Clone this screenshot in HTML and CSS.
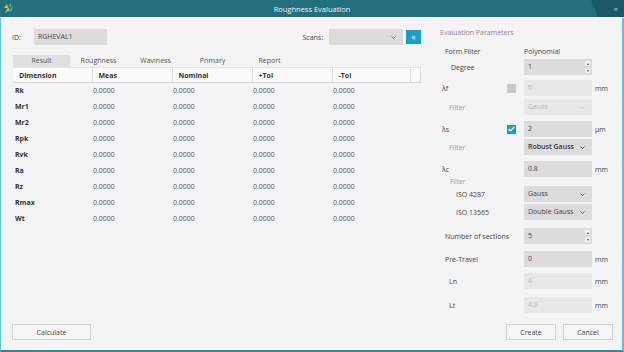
FILE: index.html
```html
<!DOCTYPE html>
<html lang="en">
<head>
    <meta charset="UTF-8">
    <meta name="viewport" content="width=device-width, initial-scale=1.0">
    <title>Roughness Evaluation</title>
    <link rel="stylesheet" href="styles.css">
</head>
<body>
    <div class="window">
        <div class="titlebar">
            <svg class="logo" width="10" height="11" viewBox="0 0 10 11">
                <polygon points="1,10 4,4 6,7" fill="#9fd13b"/>
                <polygon points="4,9 9,2 8,8" fill="#2fa8e0"/>
                <polygon points="0,5 3,1 4,5" fill="#f0c419"/>
                <polygon points="5,3 7,0 7,4" fill="#6cc04a"/>
            </svg>
            <span class="title">Roughness Evaluation</span>
            <div class="title-end"><span class="close">&times;</span></div>
        </div>
        <div class="content">
            <div class="left">
                <div class="toolbar">
                    <span class="lbl">ID:</span>
                    <div class="field id-field">RGHEVAL1</div>
                    <span class="lbl scans-lbl">Scans:</span>
                    <div class="field combo scans"><span></span><svg class="chev" width="5" height="3" viewBox="0 0 5 3"><polyline points="0.5,0.5 2.5,2.5 4.5,0.5" fill="none" stroke="#666" stroke-width="0.9"/></svg></div>
                    <button class="collapse">&laquo;</button>
                </div>
                <div class="tabs">
                    <div class="tab active">Result</div>
                    <div class="tab">Roughness</div>
                    <div class="tab">Waviness</div>
                    <div class="tab">Primary</div>
                    <div class="tab">Report</div>
                </div>
                <table class="results">
                    <colgroup>
                        <col class="c-dim"><col class="c-val"><col class="c-val"><col class="c-val"><col class="c-last"><col class="c-end">
                    </colgroup>
                    <thead>
                        <tr><th>Dimension</th><th>Meas</th><th>Nominal</th><th>+Tol</th><th>-Tol</th><th></th></tr>
                    </thead>
                    <tbody>
                        <tr><td>Rk</td><td>0.0000</td><td>0.0000</td><td>0.0000</td><td>0.0000</td><td></td></tr>
                        <tr><td>Mr1</td><td>0.0000</td><td>0.0000</td><td>0.0000</td><td>0.0000</td><td></td></tr>
                        <tr><td>Mr2</td><td>0.0000</td><td>0.0000</td><td>0.0000</td><td>0.0000</td><td></td></tr>
                        <tr><td>Rpk</td><td>0.0000</td><td>0.0000</td><td>0.0000</td><td>0.0000</td><td></td></tr>
                        <tr><td>Rvk</td><td>0.0000</td><td>0.0000</td><td>0.0000</td><td>0.0000</td><td></td></tr>
                        <tr><td>Ra</td><td>0.0000</td><td>0.0000</td><td>0.0000</td><td>0.0000</td><td></td></tr>
                        <tr><td>Rz</td><td>0.0000</td><td>0.0000</td><td>0.0000</td><td>0.0000</td><td></td></tr>
                        <tr><td>Rmax</td><td>0.0000</td><td>0.0000</td><td>0.0000</td><td>0.0000</td><td></td></tr>
                        <tr><td>Wt</td><td>0.0000</td><td>0.0000</td><td>0.0000</td><td>0.0000</td><td></td></tr>
                    </tbody>
                </table>
                <div class="left-footer">
                    <button class="btn calc">Calculate</button>
                </div>
            </div>

            <div class="right">
                <div class="section-title">Evaluation Parameters</div>

                <div class="row head-row">
                    <span class="lbl ind-1">Form Filter</span><span></span>
                    <span class="plain">Polynomial</span>
                </div>
                <div class="row sp2">
                    <span class="lbl ind-3">Degree</span><span></span>
                    <div class="field spin">1<span class="arrows"><i class="up"></i><i class="down"></i></span></div>
                </div>
                <div class="row sp5">
                    <span class="lbl lam">&lambda;f</span>
                    <span class="check off"></span>
                    <div class="field disabled">0</div>
                    <span class="unit">mm</span>
                </div>
                <div class="row sp3">
                    <span class="lbl sub ind-2">Filter</span><span></span>
                    <div class="field combo disabled"><span>Gauss</span><svg class="chev" width="5" height="3" viewBox="0 0 5 3"><polyline points="0.5,0.5 2.5,2.5 4.5,0.5" fill="none" stroke="#bbb" stroke-width="0.9"/></svg></div>
                </div>
                <div class="row sp6">
                    <span class="lbl lam">&lambda;s</span>
                    <span class="check on"><svg width="7" height="6" viewBox="0 0 7 6"><polyline points="0.8,3 2.7,4.8 6.2,0.8" fill="none" stroke="#fff" stroke-width="1.2"/></svg></span>
                    <div class="field">2</div>
                    <span class="unit">&mu;m</span>
                </div>
                <div class="row sp2">
                    <span class="lbl sub ind-2">Filter</span><span></span>
                    <div class="field combo strong"><span>Robust Gauss</span><svg class="chev" width="5" height="3" viewBox="0 0 5 3"><polyline points="0.5,0.5 2.5,2.5 4.5,0.5" fill="none" stroke="#555" stroke-width="0.9"/></svg></div>
                </div>
                <div class="row sp6">
                    <span class="lbl lam">&lambda;c</span><span></span>
                    <div class="field">0.8</div>
                    <span class="unit">mm</span>
                </div>
                <div class="mini-title">Filter</div>
                <div class="row">
                    <span class="lbl ind-4">ISO 4287</span><span></span>
                    <div class="field combo"><span>Gauss</span><svg class="chev" width="5" height="3" viewBox="0 0 5 3"><polyline points="0.5,0.5 2.5,2.5 4.5,0.5" fill="none" stroke="#555" stroke-width="0.9"/></svg></div>
                </div>
                <div class="row sp2">
                    <span class="lbl ind-4">ISO 13565</span><span></span>
                    <div class="field combo"><span>Double Gauss</span><svg class="chev" width="5" height="3" viewBox="0 0 5 3"><polyline points="0.5,0.5 2.5,2.5 4.5,0.5" fill="none" stroke="#555" stroke-width="0.9"/></svg></div>
                </div>
                <div class="row sp8">
                    <span class="lbl wide ind-1">Number of sections</span>
                    <div class="field spin">5<span class="arrows"><i class="up"></i><i class="down"></i></span></div>
                </div>
                <div class="row sp7">
                    <span class="lbl ind-1">Pre-Travel</span><span></span>
                    <div class="field">0</div>
                    <span class="unit">mm</span>
                </div>
                <div class="row sp6">
                    <span class="lbl ind-2">Ln</span><span></span>
                    <div class="field disabled">4</div>
                    <span class="unit">mm</span>
                </div>
                <div class="row sp8">
                    <span class="lbl ind-2">Lt</span><span></span>
                    <div class="field disabled">4.8</div>
                    <span class="unit">mm</span>
                </div>

                <div class="actions">
                    <button class="btn">Create</button>
                    <button class="btn">Cancel</button>
                </div>
            </div>
        </div>
    </div>
</body>
</html>
```

FILE: styles.css
```css
* {
    box-sizing: border-box;
}
body {
    margin: 0;
    font-family: "Open Sans", "Noto Sans", sans-serif;
    font-size: 7px;
    color: #444;
    background: #f4f4f4;
}
.window {
    width: 624px;
    height: 352px;
    display: flex;
    flex-direction: column;
    background: #f4f4f4;
}

/* title bar */
.titlebar {
    height: 18px;
    display: grid;
    grid-template-columns: 40px 1fr 40px;
    align-items: center;
    background: #246f7e;
    border-bottom: 1px solid #f7f7f7;
}
.logo {
    margin-left: 4px;
}
.title {
    text-align: center;
    color: #eef4f5;
    font-size: 7.5px;
}
.title-end {
    height: 17px;
    background: #1b5867;
    clip-path: polygon(7px 0, 100% 0, 100% 100%, 14px 100%);
    display: flex;
    align-items: center;
    justify-content: flex-end;
    padding-right: 6px;
}
.close {
    color: #c8d6da;
    font-size: 8px;
    line-height: 8px;
}

.content {
    flex: 1;
    display: flex;
    border-left: 1px solid #5cc4e2;
    border-right: 2px solid #5cc4e2;
    border-bottom: 2px solid #2f8ba2;
}

/* left side */
.left {
    width: 420px;
    padding: 11px 0 10px 11px;
    display: flex;
    flex-direction: column;
}
.toolbar {
    display: flex;
    align-items: center;
    height: 16px;
}
.lbl {
    white-space: nowrap;
}
.field {
    height: 16px;
    line-height: 16px;
    background: #dcdcdc;
    padding-left: 4px;
    color: #444;
    position: relative;
}
.id-field {
    width: 73px;
    margin-left: 13px;
}
.scans-lbl {
    margin-left: auto;
    margin-right: 6px;
}
.scans {
    width: 74px;
}
.combo {
    display: flex;
    align-items: center;
    justify-content: space-between;
    padding-right: 7px;
}
.collapse {
    width: 15px;
    height: 14px;
    margin-left: 3px;
    border: none;
    padding: 0;
    background: #1c9dca;
    color: #fff;
    font-size: 9px;
    line-height: 12px;
    font-family: inherit;
}

.tabs {
    display: flex;
    margin: 10px 0 0 1px;
}
.tab {
    width: 57px;
    height: 12px;
    line-height: 12px;
    text-align: center;
    color: #555;
}
.tab.active {
    background: #e0e0e0;
}

.results {
    width: 407px;
    margin-left: 1px;
    border-collapse: collapse;
    table-layout: fixed;
}
.c-dim { width: 79px; }
.c-val { width: 80px; }
.c-last { width: 78px; }
.c-end { width: 10px; }
.results th {
    height: 15px;
    padding: 0 0 0 6px;
    text-align: left;
    font-weight: bold;
    color: #333;
    background: #fbfbfb;
    border-top: 1px solid #e4e4e4;
    border-right: 1px solid #dadada;
    border-bottom: 1px solid #d6d6d6;
}
.results td {
    height: 16px;
    padding: 0 0 0 1px;
    color: #555;
}
.results td:first-child {
    padding-left: 2px;
    font-weight: bold;
    color: #333;
}
.left-footer {
    margin-top: auto;
}

.btn {
    height: 16px;
    border: 1px solid #d0d0d0;
    background: #f7f7f7;
    color: #444;
    font-family: inherit;
    font-size: 7px;
    padding: 0;
}
.calc {
    width: 79px;
}

/* right side */
.right {
    flex: 1;
    margin-left: 19px;
    padding-top: 10px;
    display: flex;
    flex-direction: column;
}
.section-title {
    height: 10px;
    line-height: 10px;
    color: #8a8a8a;
}
.row {
    display: grid;
    grid-template-columns: 67px 17px 68px auto;
    align-items: center;
    height: 16px;
}
.head-row {
    margin-top: 7px;
    height: 12px;
}
.sp2 { margin-top: 2px; }
.sp3 { margin-top: 3px; }
.sp5 { margin-top: 5px; }
.sp6 { margin-top: 6px; }
.sp7 { margin-top: 7px; }
.sp8 { margin-top: 8px; }

.lam { padding-left: 2px; }
.ind-1 { padding-left: 5px; }
.ind-2 { padding-left: 9px; }
.ind-3 { padding-left: 11px; }
.ind-4 { padding-left: 16px; }
.sub {
    color: #9a9a9a;
}
.wide {
    grid-column: 1 / 3;
}
.plain {
    color: #444;
}
.unit {
    padding-left: 3px;
}
.mini-title {
    height: 9px;
    line-height: 9px;
    padding-left: 10px;
    color: #9a9a9a;
    font-size: 6.5px;
}
.field.disabled {
    background: #e8e8e8;
    color: #b8b8b8;
}
.field.strong {
    color: #333;
    font-weight: 600;
}
.check {
    width: 9px;
    height: 9px;
    display: flex;
    align-items: center;
    justify-content: center;
}
.check.off {
    background: #c9c9c9;
}
.check.on {
    background: #1c9dca;
}
.spin .arrows {
    position: absolute;
    right: 2px;
    top: 2px;
    display: flex;
    flex-direction: column;
    gap: 2px;
}
.spin i {
    width: 5px;
    height: 5px;
    background: #f2f2f2;
    display: flex;
    align-items: center;
    justify-content: center;
}
.spin i::after {
    content: "";
    border-left: 1.5px solid transparent;
    border-right: 1.5px solid transparent;
}
.spin .up::after {
    border-bottom: 2px solid #444;
}
.spin .down::after {
    border-top: 2px solid #444;
}

.actions {
    margin-top: auto;
    margin-bottom: 10px;
    display: flex;
    justify-content: flex-end;
    gap: 7px;
    padding-right: 9px;
}
.actions .btn {
    width: 50px;
}
```
